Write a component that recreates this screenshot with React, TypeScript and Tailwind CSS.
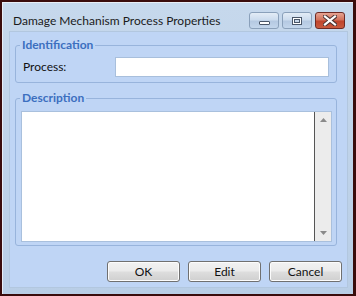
import React from 'react';

const font = { fontFamily: 'Lato, "Noto Sans", sans-serif' };

function CaptionButton({ kind }: { kind: 'min' | 'max' | 'close' }) {
  const base =
    kind === 'close'
      ? 'border-[#6e2a24] bg-[linear-gradient(#e6a392,#d2725c_45%,#c0442c_55%,#c85a3e)]'
      : 'border-[#8aa0ba] bg-[linear-gradient(#e3ecf6,#ccdcee_45%,#b5c9e2_55%,#c3d6ec)]';
  return (
    <div className={`w-[30px] h-[17px] rounded-[3px] border flex items-center justify-center ${base}`}>
      {kind === 'min' && (
        <div className="mt-[5px] w-[11px] h-[4px] bg-white border border-[#4a5668] rounded-[1px]" />
      )}
      {kind === 'max' && (
        <div className="w-[10px] h-[8px] border border-[#4a5668] bg-white flex items-center justify-center">
          <div className="w-[6px] h-[4px] border border-[#4a5668] bg-[#c7d6e8]" />
        </div>
      )}
      {kind === 'close' && (
        <svg width="14" height="11" viewBox="0 0 14 11">
          <path d="M2 1.5 L12 9.5 M12 1.5 L2 9.5" stroke="#4b3434" strokeWidth="4.2" strokeLinecap="square" />
          <path d="M2 1.5 L12 9.5 M12 1.5 L2 9.5" stroke="#ffffff" strokeWidth="2.2" strokeLinecap="square" />
        </svg>
      )}
    </div>
  );
}

function DialogButton({ label }: { label: string }) {
  return (
    <button className="w-[73px] h-[21px] rounded-[3px] border border-[#707070] bg-[linear-gradient(#f2f2f2,#ebebeb_45%,#dddddd_55%,#cfcfcf)] text-[12px] text-[#111] leading-none shadow-[inset_0_0_0_1px_#fcfcfc]">
      {label}
    </button>
  );
}

function Group({ title, children, className }: { title: string; children: React.ReactNode; className?: string }) {
  return (
    <fieldset className={`min-w-0 border border-[#98b4dc] rounded-[3px] ${className ?? ''}`}>
      <legend className="ml-[4px] px-[2px] text-[12px] font-bold text-[#3c6fbf] leading-[16px]">{title}</legend>
      {children}
    </fieldset>
  );
}

export default function App() {
  return (
    <div style={font} className="w-[356px] h-[296px] bg-[#3a0c0c] pt-[2px] pl-[2px] pr-[3px] pb-[2px]">
      <div className="w-full h-full bg-[linear-gradient(#c6d8ec,#b9cee6)] border-l border-t border-[#e8eef6] pl-[6px] pr-[5px] pb-[6px] flex flex-col">
        <div className="h-[28px] flex items-start">
          <div className="pl-[4px] pt-[10px] text-[12px] text-[#1b1b1b] leading-[16px] flex-1 whitespace-nowrap">
            Damage Mechanism Process Properties
          </div>
          <div className="pt-[9px] pr-[3px] flex gap-[3px]">
            <CaptionButton kind="min" />
            <CaptionButton kind="max" />
            <CaptionButton kind="close" />
          </div>
        </div>
        <div className="flex-1 min-w-0 bg-[#bfd5f5] border border-[#b2c7df] pt-[5px] pl-[5px] pr-[10px] pb-[5px] flex flex-col">
          <Group title="Identification" className="pb-[5px]">
            <div className="flex items-center pt-[4px] px-[7px]">
              <span className="w-[92px] text-[12px] text-[#111]">Process:</span>
              <input className="w-0 flex-1 h-[20px] bg-white border border-[#a8bfdc] outline-none" />
            </div>
          </Group>
          <Group title="Description" className="mt-[7px] pb-[3px]">
            <div className="mt-[5px] ml-[5px] mr-[4px] h-[131px] flex border border-[#a9c0dd] bg-white">
              <div className="flex-1" />
              <div className="w-[17px] bg-[#ececec] border-l border-[#555] flex flex-col justify-between items-center py-[6px]">
                <svg width="7" height="4" viewBox="0 0 7 4"><path d="M0 4 L3.5 0 L7 4 Z" fill="#8a8a8a" /></svg>
                <svg width="7" height="4" viewBox="0 0 7 4"><path d="M0 0 L3.5 4 L7 0 Z" fill="#8a8a8a" /></svg>
              </div>
            </div>
          </Group>
          <div className="flex-1" />
          <div className="flex justify-end gap-[8px] -mr-[5px]">
            <DialogButton label="OK" />
            <DialogButton label="Edit" />
            <DialogButton label="Cancel" />
          </div>
        </div>
      </div>
    </div>
  );
}
